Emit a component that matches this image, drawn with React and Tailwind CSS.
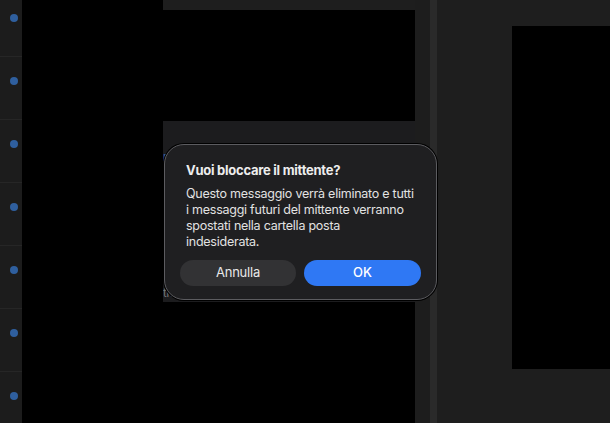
import React from 'react';

// Mail list rows on the far left: only the unread dots remain visible
const rows = [0, 1, 2, 3, 4, 5, 6];

function UnreadColumn() {
  return (
    <div className="w-[22px] shrink-0 bg-[#1c1c1c] flex flex-col -mt-[6px]">
      {rows.map((r) => (
        <div key={r} className="h-[63px] shrink-0 border-b border-[#262626] pl-[10px] pt-[20px]">
          <div className="w-[8px] h-[8px] rounded-full bg-[#2f5f9e]" />
        </div>
      ))}
    </div>
  );
}

function MessagePane() {
  return (
    <div className="w-[393px] shrink-0 flex bg-black">
      <div className="w-[141px] shrink-0 bg-black" />
      <div className="flex-1 flex flex-col">
        <div className="h-[10px] bg-[#1e1e1e]" />
        <div className="h-[111px] bg-black" />
        {/* sender card behind the alert */}
        <div className="h-[181px] bg-[#1c1c1e] pt-[28px] text-[11px] leading-[16px] font-['Inter',sans-serif] text-[#6b6b6b] overflow-hidden whitespace-nowrap">
          <p className="text-[#3c6aa8]">ricevuto da mittente@posta.it</p>
          <p className="mt-[12px]">= inoltra</p>
          <p className="mt-[14px] text-[#3c6aa8]">rispondi a tutti</p>
          <p className="mt-[4px]">/ archivia</p>
          <p className="mt-[12px]">l elimina</p>
          <p className="mt-[14px] text-[#7a7a7a]">thiche informazioni</p>
        </div>
        <div className="flex-1 bg-black" />
      </div>
    </div>
  );
}

function Sidebar() {
  return (
    <div className="flex-1 flex">
      <div className="w-[15px] shrink-0 bg-[#1d1d1d]" />
      <div className="w-[7px] shrink-0 bg-[#2a2a2a]" />
      <div className="flex-1 flex bg-[#1e1e1e]">
        <div className="w-[75px] shrink-0" />
        <div className="flex-1 flex flex-col">
          <div className="h-[26px]" />
          <div className="h-[343px] bg-black" />
        </div>
      </div>
    </div>
  );
}

function BlockSenderAlert() {
  return (
    <div className="absolute left-[164px] top-[144px] w-[273px] h-[156px] rounded-[20px] bg-[#1f1f21] border border-[#5c5c60] shadow-[0_0_0_1px_#000] px-[15px] pt-[17px] font-['Inter',sans-serif]">
      <h2 className="text-[13px] leading-[17px] font-bold tracking-[-0.25px] text-[#ededed] pl-[6px]">Vuoi bloccare il mittente?</h2>
      <p className="mt-[7px] pl-[6px] text-[12.5px] leading-[16px] tracking-[-0.25px] text-[#e2e2e2] whitespace-nowrap">
        Questo messaggio verrà eliminato e tutti
        <br />
        i messaggi futuri del mittente verranno
        <br />
        spostati nella cartella posta
        <br />
        indesiderata.
      </p>
      <div className="mt-[10px] flex gap-[8px]">
        <button className="w-[117px] h-[26px] rounded-full bg-[#323234] text-[13px] tracking-[-0.2px] text-[#e8e8e8]">Annulla</button>
        <button className="w-[118px] h-[26px] rounded-full bg-[#2f78f4] text-[13px] font-medium text-white">OK</button>
      </div>
    </div>
  );
}

export default function App() {
  return (
    <div className="relative w-[610px] h-[423px] overflow-hidden bg-black flex">
      <UnreadColumn />
      <MessagePane />
      <Sidebar />
      <BlockSenderAlert />
    </div>
  );
}
